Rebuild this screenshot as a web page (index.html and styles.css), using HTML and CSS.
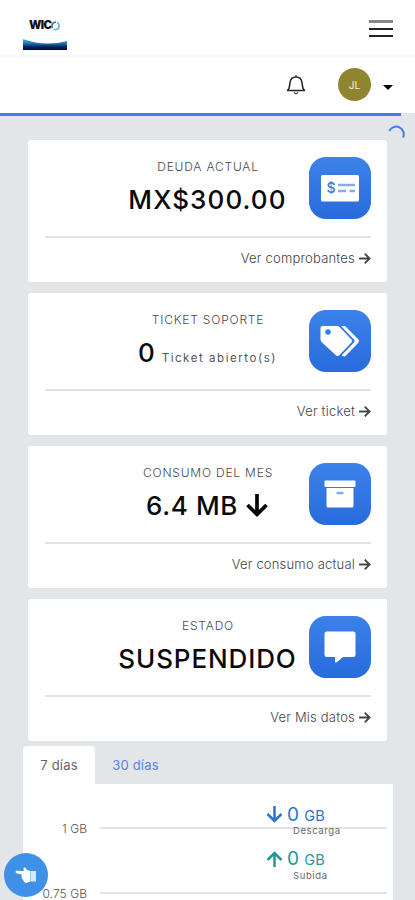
FILE: index.html
```html
<!DOCTYPE html>
<html lang="es">
<head>
<meta charset="utf-8">
<meta name="viewport" content="width=device-width">
<title>Panel</title>
<link rel="stylesheet" href="styles.css">
</head>
<body>
<svg class="defs" width="0" height="0">
  <symbol id="arrow" viewBox="0 0 24 24"><path d="M2 12H21M12.500 3L21.500 12L12.500 21" fill="none" stroke="currentColor" stroke-width="3.300"/></symbol>
</svg>
<header class="topbar">
  <div class="logo">
    <div class="logo-word"><span>WIC</span><svg width="10" height="10" viewBox="0 0 10 10"><path d="M1.500 7A3.800 3.800 0 0 1 5 1.200" fill="none" stroke="#347eb8" stroke-width="1.700"/><path d="M6 1.500A3.600 3.600 0 1 1 3 8.300" fill="none" stroke="#62aedf" stroke-width="1.500"/></svg></div>
    <svg class="wave" width="44" height="11" viewBox="0 0 44 11"><defs><linearGradient id="sea" x1="0" y1="0" x2="0" y2="1"><stop offset="0" stop-color="#49b7e4"/><stop offset=".45" stop-color="#176aab"/><stop offset=".7" stop-color="#06245f"/><stop offset="1" stop-color="#020b3e"/></linearGradient></defs><path d="M0 0Q22 8 44 2V11H0Z" fill="url(#sea)"/></svg>
  </div>
  <div class="burger"><i></i><i></i><i></i></div>
</header>
<nav class="userbar">
  <svg class="bell" width="20" height="22" viewBox="0 0 20 22"><path d="M1.500 16.500C3.800 14.500 3.500 12 4 8.500C4.500 5 7 3 10 3S15.500 5 16 8.500C16.500 12 16.200 14.500 18.500 16.500Z" fill="none" stroke="#222" stroke-width="1.500" stroke-linejoin="round"/><path d="M10 1V3M8 18Q10 21.500 12 18" fill="none" stroke="#555" stroke-width="1.500"/></svg>
  <div class="avatar">JL</div>
  <i class="caret"></i>
</nav>
<div class="progress"><i></i></div>
<svg class="spinner" width="18" height="18" viewBox="0 0 18 18"><path d="M1.200 6A7.200 7.200 0 0 1 15 12.500" fill="none" stroke="#3f7cec" stroke-width="2"/></svg>
<main>
  <section class="card">
    <div class="top"><div class="info"><h2>DEUDA ACTUAL</h2><p class="value debt">MX$300.00</p></div>
      <div class="icon"><svg width="62" height="62" viewBox="0 0 62 62"><rect x="12" y="18" width="38" height="26.500" rx="1.500" fill="#fff"/><text class="dollar" x="17.500" y="35.500">$</text><path d="M29 28H46M29 34H37M40.500 34H46" stroke="#86aaea" stroke-width="2.300"/></svg></div></div>
    <a class="more"><span>Ver comprobantes</span><svg width="13" height="13"><use href="#arrow"/></svg></a>
  </section>
  <section class="card">
    <div class="top"><div class="info"><h2>TICKET SOPORTE</h2><p class="value ticket">0 <small>Ticket abierto(s)</small></p></div>
      <div class="icon"><svg width="62" height="62" viewBox="0 0 62 62"><path fill-rule="evenodd" d="M13.500 16H28Q29.500 16 30.500 17L42 29Q44 31 42 33L30.500 45Q28.500 47 26.500 45L12.500 32Q11.500 31 11.500 29V18Q11.500 16 13.500 16ZM19 19.200A2.800 2.800 0 1 0 19 24.800A2.800 2.800 0 1 0 19 19.200Z" fill="#fff"/><path d="M32 16H36L49.500 29.500Q50.500 31 49.500 32.500L37 45.500Q35.500 47 33.500 46L32.500 45.500L45 32.500Q46 31 45 29.500Z" fill="#fff"/></svg></div></div>
    <a class="more"><span>Ver ticket</span><svg width="13" height="13"><use href="#arrow"/></svg></a>
  </section>
  <section class="card">
    <div class="top"><div class="info"><h2>CONSUMO DEL MES</h2><p class="value usage">6.4 MB<svg width="24" height="24" viewBox="0 0 24 24"><path d="M12 0V20M2.500 11L12 20.500L21.500 11" fill="none" stroke="#050505" stroke-width="3.700"/></svg></p></div>
      <div class="icon"><svg width="62" height="62" viewBox="0 0 62 62"><rect x="15.500" y="17.500" width="31" height="6.500" rx="1" fill="#fff"/><path d="M17.500 25H44.500V43Q44.500 44.500 43 44.500H19Q17.500 44.500 17.500 43Z" fill="#fff"/><path d="M27.500 30H34.500" stroke="#86aaea" stroke-width="2.500"/></svg></div></div>
    <a class="more"><span>Ver consumo actual</span><svg width="13" height="13"><use href="#arrow"/></svg></a>
  </section>
  <section class="card">
    <div class="top"><div class="info"><h2>ESTADO</h2><p class="value status">SUSPENDIDO</p></div>
      <div class="icon"><svg width="62" height="62" viewBox="0 0 62 62"><path d="M18 15.500H44Q46.500 15.500 46.500 18V38.500Q46.500 41 44 41H34L28 46Q26 47.500 26 45.500V41H18Q15.500 41 15.500 38.500V18Q15.500 15.500 18 15.500Z" fill="#fff"/></svg></div></div>
    <a class="more"><span>Ver Mis datos</span><svg width="13" height="13"><use href="#arrow"/></svg></a>
  </section>
</main>
<section class="traffic">
  <div class="tabs"><span class="tab active">7 días</span><span class="tab">30 días</span></div>
  <div class="chart">
    <div class="tick"><span>1 GB</span><i></i></div>
    <div class="tick"><span>0.75 GB</span><i></i></div>
    <div class="legend">
      <div class="series down"><svg width="17" height="17" viewBox="0 0 17 17"><path d="M8.500 0V14.500M1.500 8L8.500 15L15.500 8" fill="none" stroke="currentColor" stroke-width="2.500"/></svg><p>0 <small>GB</small></p><em>Descarga</em></div>
      <div class="series up"><svg width="17" height="17" viewBox="0 0 17 17"><path d="M8.500 16V2M1.500 9L8.500 2L15.500 9" fill="none" stroke="currentColor" stroke-width="2.500"/></svg><p>0 <small>GB</small></p><em>Subida</em></div>
    </div>
  </div>
</section>
<div class="fab"><svg width="22" height="17" viewBox="0 0 22 17"><path d="M1 3.700Q0 6 2 6.600L7 7.500Q5.500 8.800 7 10.200Q6.500 12 8 12.800Q8.500 15.500 11 16L15.500 14.500V4L12 3L10.500 .8Q8.500-.3 8.500 2L9 4Z" fill="#fff"/><path d="M16 4H21V14.500H16Z" fill="#d7e8fa"/></svg></div>
</body>
</html>
```
FILE: styles.css
```css
* { box-sizing: border-box; }
body { margin: 0; height: 900px; overflow: hidden; position: relative; background: #e3e6e8; font-family: Inter, "Liberation Sans", sans-serif; color: #111; }
h2, p { margin: 0; }
.defs { position: absolute; }
.topbar { height: 57px; background: #fff; border-bottom: 2px solid #f8f8f8; display: flex; justify-content: space-between; padding: 19px 22px 0 23px; }
.logo { width: 44px; height: 31px; display: flex; flex-direction: column; justify-content: space-between; }
.logo-word { display: flex; align-items: center; padding-left: 6px; height: 13px; }
.logo-word span { font-size: 11.500px; font-weight: 900; letter-spacing: -.7px; line-height: 13px; color: #111; width: 22px; }
.wave { display: block; }
.burger { width: 24px; height: 17px; display: flex; flex-direction: column; justify-content: space-between; margin-top: 1px; }
.burger i { height: 2px; background: #222; }
.burger i:first-child { height: 3px; background: #888; }
.userbar { height: 56px; background: #fff; display: flex; align-items: center; justify-content: flex-end; padding: 0 22px 1px 0; }
.bell { margin-right: 32px; }
.avatar { width: 33px; height: 33px; border-radius: 50%; background: #8f8430; color: #e6e2c9; font-size: 10px; line-height: 34px; text-align: center; font-weight: 500; margin-right: 12px; }
.caret { border: 5.500px solid transparent; border-top-color: #050505; border-bottom: 0; margin-top: 5px; }
.progress { height: 3px; }
.progress i { display: block; width: 401px; height: 3px; background: #3e7de9; }
.spinner { position: absolute; left: 388px; top: 125px; }
main { padding: 24px 28px 0; display: flex; flex-direction: column; gap: 11px; }
.card { height: 142px; background: #fff; border-radius: 3px; padding: 17px 16px 0 17px; }
.top { height: 81px; border-bottom: 2px solid #e2e3e5; display: flex; justify-content: flex-end; }
.info { width: 203px; text-align: center; white-space: nowrap; display: flex; flex-direction: column; align-items: center; }
h2 { font-size: 12px; font-weight: 300; color: #4a4a4a; line-height: 20px; letter-spacing: .8px; padding-left: 1px; }
.value { font-size: 26px; font-weight: 500; line-height: 34px; margin-top: 6px; letter-spacing: 1.100px; color: #090909; }
.ticket { letter-spacing: 0; }
.ticket small { font-size: 11.500px; font-weight: 400; letter-spacing: 1.550px; color: #555; }
.usage { display: flex; align-items: center; letter-spacing: .6px; gap: 7px; }
.status { letter-spacing: .9px; }
.icon { width: 62px; height: 62px; border-radius: 17px; background: linear-gradient(#3d82ea, #286bdc); }
.icon svg { display: block; }
.dollar { font-size: 14px; font-weight: 500; fill: #397ce4; }
.more { display: flex; justify-content: flex-end; align-items: center; gap: 3px; height: 40px; font-size: 13px; font-weight: 300; color: #444; letter-spacing: .2px; }
.traffic { margin: 5px 22px 0 23px; }
.tabs { height: 38px; display: flex; font-size: 13px; }
.tab { width: 81px; line-height: 38px; text-align: center; color: #5b80e8; letter-spacing: .2px; }
.tab.active { width: 72px; background: #fff; border-radius: 4px 4px 0 0; color: #666; }
.chart { position: relative; height: 116px; background: #fff; overflow: hidden; padding: 34px 6px 0 0; }
.tick { height: 20px; margin-bottom: 45px; display: flex; align-items: center; font-size: 12px; font-weight: 300; color: #555; letter-spacing: .05px; }
.tick span { width: 64px; text-align: right; white-space: nowrap; }
.tick i { flex: 1; height: 2px; background: #e2e3e5; margin-left: 13px; }
.legend { position: absolute; left: 243px; top: 20px; }
.series { display: grid; grid-template-columns: 17px auto; column-gap: 4px; height: 44.500px; grid-template-rows: 21px 11px; align-items: center; }
.series p { font-size: 19px; line-height: 21px; }
.series small { font-size: 14.500px; }
.series em { grid-column: 2; font-style: normal; font-size: 9.500px; letter-spacing: .6px; color: #666; line-height: 11px; padding-left: 6px; }
.down { color: #2874d2; }
.up { color: #1a9b96; }
.fab { position: absolute; left: 4px; top: 853px; width: 44px; height: 44px; border-radius: 50%; background: #3f91e7; display: flex; align-items: center; justify-content: center; }
```
